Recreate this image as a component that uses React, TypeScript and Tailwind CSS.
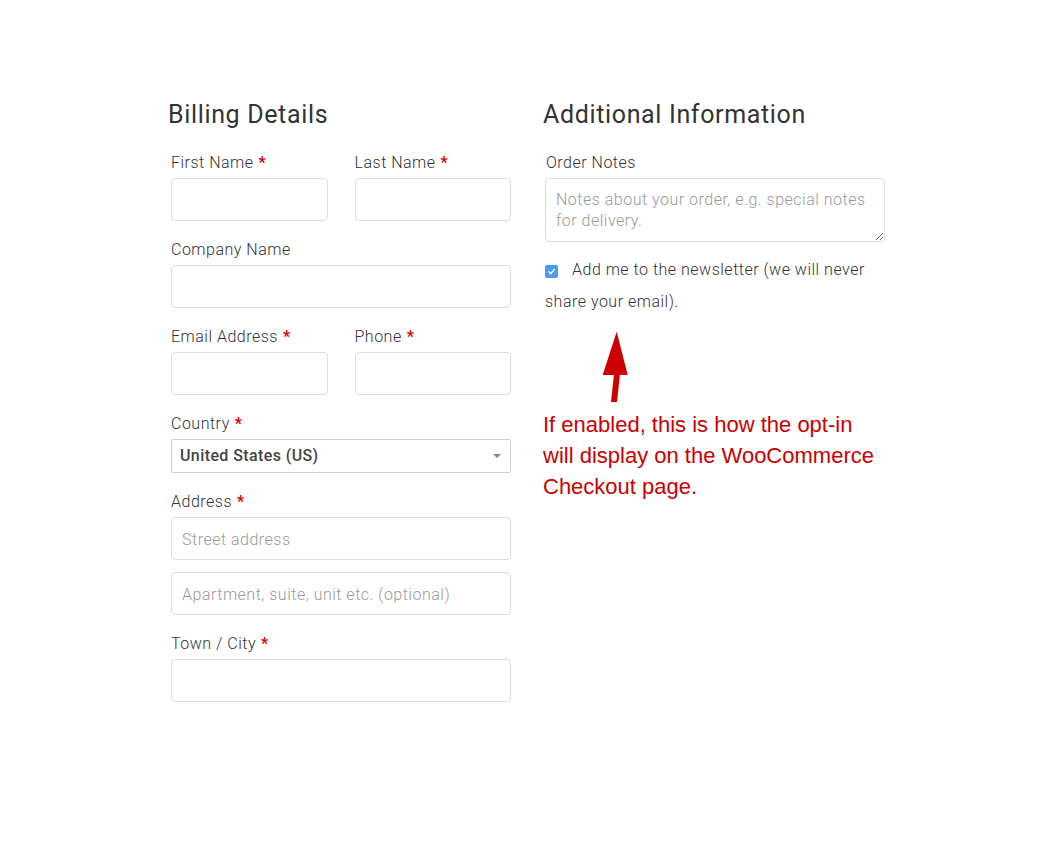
import React from "react";

const body = { fontFamily: "Roboto, 'Noto Sans', sans-serif" };

const Star = () => <span className="ml-[5px] font-bold tracking-normal text-[#e00000]">*</span>;

const Label = ({ text, required }: { text: string; required?: boolean }) => (
  <div className="h-6 pt-px text-[16px] leading-6 font-light tracking-[0.5px] text-[#333]">
    {text}
    {required && <Star />}
  </div>
);

const Field = ({ placeholder }: { placeholder?: string }) => (
  <input
    placeholder={placeholder}
    className="mt-1 block h-[43px] w-full rounded-[4px] border border-[#dcdcdc] bg-white px-[10px] pt-px text-[16px] font-light tracking-[0.5px] text-[#333] outline-none placeholder:text-[#9a9a9a]"
  />
);

export default function App() {
  return (
    <div className="min-h-[860px] w-full bg-white" style={body}>
      <div className="flex pl-[168px] pt-[99px]">
        {/* billing */}
        <div className="w-[375px]">
          <h3 className="h-8 text-[25px] leading-8 font-normal tracking-[0.65px] text-[#333]">Billing Details</h3>
          <div className="mt-[19px] w-[340px] pl-[3px] box-content">
            <div className="grid grid-cols-2 gap-x-[27px]">
              <div>
                <Label text="First Name" required />
                <Field />
              </div>
              <div>
                <Label text="Last Name" required />
                <Field />
              </div>
            </div>
            <div className="mt-4">
              <Label text="Company Name" />
              <Field />
            </div>
            <div className="mt-4 grid grid-cols-2 gap-x-[27px]">
              <div>
                <Label text="Email Address" required />
                <Field />
              </div>
              <div>
                <Label text="Phone" required />
                <Field />
              </div>
            </div>
            <div className="mt-4">
              <Label text="Country" required />
              <div className="mt-1 flex h-[34px] items-center justify-between rounded-[2px] border border-[#cfcfcf] bg-white pl-2 pr-[9px]">
                <span className="text-[16px] font-medium tracking-[0.4px] text-[#444]">United States (US)</span>
                <svg width="8" height="4" viewBox="0 0 8 4">
                  <path d="M0 0 L8 0 L4 4 Z" fill="#888" />
                </svg>
              </div>
            </div>
            <div className="mt-4">
              <Label text="Address" required />
              <Field placeholder="Street address" />
              <div className="mt-3">
                <Field placeholder="Apartment, suite, unit etc. (optional)" />
              </div>
            </div>
            <div className="mt-4">
              <Label text="Town / City" required />
              <Field />
            </div>
          </div>
        </div>

        {/* additional */}
        <div className="w-[345px]">
          <h3 className="h-8 text-[25px] leading-8 font-normal tracking-[0.65px] text-[#333]">
            Additional Information
          </h3>
          <div className="mt-[19px] pl-[2px]">
            <div className="pl-px">
              <Label text="Order Notes" />
            </div>
            <textarea
              placeholder={"Notes about your order, e.g. special notes\nfor delivery."}
              className="mt-1 block h-[64px] w-[340px] rounded-[4px] border border-[#dcdcdc] px-[10px] py-[10px] text-[16px] leading-[21px] font-light tracking-[0.5px] text-[#333] outline-none placeholder:text-[#9a9a9a]"
            />
            <p className="mt-3 w-[340px] text-[16px] leading-8 font-light tracking-[0.5px] text-[#333]">
              <span className="mr-[14px] inline-flex h-[13px] w-[13px] items-center justify-center rounded-[2px] bg-[#4a9cf0] align-[-1px]">
                <svg width="9" height="9" viewBox="0 0 10 10">
                  <path d="M2 5.2 L4.2 7.4 L8.2 2.6" fill="none" stroke="#fff" strokeWidth="1.6" strokeLinecap="round" strokeLinejoin="round" />
                </svg>
              </span>
              Add me to the newsletter (we will never share your email).
            </p>
            <svg width="120" height="91" viewBox="0 0 120 91" className="block">
              <polygon points="71.7,13.7 57.7,57 82.7,57" fill="#cc0000" />
              <polygon points="69,56 75,56 72,84 66,84" fill="#cc0000" />
            </svg>
            <p
              className="ml-[-2px] w-[335px] text-[22px] leading-[31px] text-[#cc0000]"
              style={{ fontFamily: "'Liberation Sans', Arial, sans-serif" }}
            >
              If enabled, this is how the opt-in will display on the WooCommerce Checkout page.
            </p>
          </div>
        </div>
      </div>
    </div>
  );
}
